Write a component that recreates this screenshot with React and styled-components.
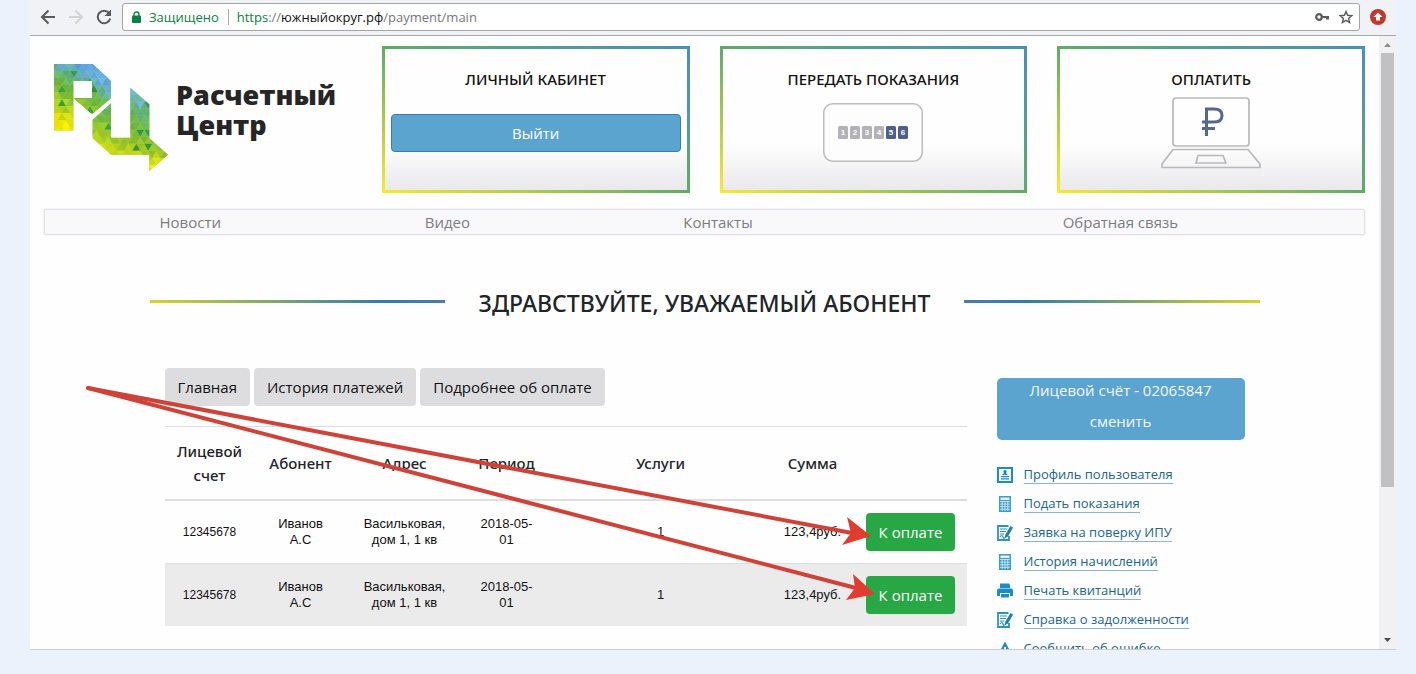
import React, { Fragment } from 'react';

import styled, { createGlobalStyle } from 'styled-components';

const navItems = ['Новости', 'Видео', 'Контакты', 'Обратная связь'];

const tabs = ['Главная', 'История платежей', 'Подробнее об оплате'];

const columns = [
    { title: 'Лицевой счет', width: 90 },
    { title: 'Абонент', width: 92 },
    { title: 'Адрес', width: 116 },
    { title: 'Период', width: 88 },
    { title: 'Услуги', width: 220 },
    { title: 'Сумма', width: 84 },
    { title: '', width: 112 },
];

const payments = [
    { id: 1, account: '12345678', name: ['Иванов', 'А.С'], address: ['Васильковая,', 'дом 1, 1 кв'], period: ['2018-05-', '01'], services: 1, sum: '123,4руб.' },
    { id: 2, account: '12345678', name: ['Иванов', 'А.С'], address: ['Васильковая,', 'дом 1, 1 кв'], period: ['2018-05-', '01'], services: 1, sum: '123,4руб.' },
];

const links = [
    { text: 'Профиль пользователя', icon: 'profile' },
    { text: 'Подать показания', icon: 'calc' },
    { text: 'Заявка на поверку ИПУ', icon: 'form' },
    { text: 'История начислений', icon: 'calc' },
    { text: 'Печать квитанций', icon: 'print' },
    { text: 'Справка о задолженности', icon: 'form' },
    { text: 'Сообщить об ошибке', icon: 'warning' },
];

// mosaic of small triangles: blue on top, green, yellow at the bottom
const stops = [
    [-0.35, [70, 145, 215]],
    [-0.1, [105, 178, 225]],
    [0.08, [95, 180, 110]],
    [0.3, [120, 186, 50]],
    [0.55, [175, 208, 30]],
    [0.78, [242, 230, 0]],
];

const mix = (v) => {
    if (v <= stops[0][0]) return stops[0][1];
    for (let i = 1; i < stops.length; i++) {
        if (v <= stops[i][0]) {
            const k = (v - stops[i - 1][0]) / (stops[i][0] - stops[i - 1][0]);
            return stops[i][1].map((c, n) => stops[i - 1][1][n] * (1 - k) + c * k);
        }
    }
    return stops[stops.length - 1][1];
};

const noise = (a, b) => {
    const n = Math.sin(a * 12.9898 + b * 78.233) * 43758.5453;
    return n - Math.floor(n);
};

const mosaic = (left, top, width, height, slope) => {
    const list = [];
    const side = 24;
    const step = 21;
    for (let r = 0; r * step < height; r++) {
        for (let c = -2; c * (side / 2) < width; c++) {
            const x = left + c * (side / 2);
            const y = top + r * step;
            const up = (r + c) % 2 === 0;
            const points = up
                ? `${x},${y + step} ${x + side},${y + step} ${x + side / 2},${y}`
                : `${x},${y} ${x + side},${y} ${x + side / 2},${y + step}`;
            const n = noise(r + left, c);
            const v = (y - top) / height - ((x - left) / width) * slope + (n - 0.5) * 0.16;
            const shade = 0.94 + noise(c, r + 5) * 0.12;
            const base = n > 0.93 && v < 0.6 && v > 0 ? [50, 155, 65] : mix(v);
            const fill = base.map((p) => Math.min(255, Math.round(p * shade)));
            list.push(<polygon key={`${r}-${c}`} points={points} fill={`rgb(${fill.join(',')})`} />);
        }
    }
    return list;
};

const Logo = () => (
    <svg width="114" height="107" viewBox="164 192 342 321" aria-hidden="true">
        <clipPath id="er">
            <path clipRule="evenodd" d="M164 192H280L335 243V295L278 343L222 294V392H164ZM222 243V294H278V243Z" />
        </clipPath>
        <clipPath id="tse">
            <path d="M335 310V413H393V263L450 313V415L506 464L450 513V464H335L279 413V360Z" />
        </clipPath>
        <g clipPath="url(#er)">
            <rect x="164" y="192" width="171" height="200" fill="#a6cf7e" />
            {mosaic(164, 192, 171, 200, 0.42)}
        </g>
        <g clipPath="url(#tse)">
            <rect x="279" y="263" width="227" height="250" fill="#a6cf7e" />
            {mosaic(279, 263, 227, 250, 0.3)}
        </g>
    </svg>
);

const Meter = () => (
    <svg width="100" height="60" viewBox="0 0 100 60" aria-hidden="true">
        <rect x="0.75" y="0.75" width="98.5" height="57.5" rx="9" fill="#fdfdfe" stroke="#bdbdc0" strokeWidth="1.5" />
        {[1, 2, 3, 4, 5, 6].map((n, i) => (
            <g key={n}>
                <rect x={15 + i * 12} y="23" width="10" height="13" rx="1.5" fill={n > 4 ? '#4d5f8c' : '#b3b2b6'} />
                <text x={20 + i * 12} y="32" textAnchor="middle" fontFamily="Liberation Sans, sans-serif" fontWeight="700" fontSize="8" fill="#fff">{n}</text>
            </g>
        ))}
    </svg>
);

const Laptop = () => (
    <svg width="100" height="72" viewBox="0 0 100 72" fill="none" stroke="#b9b9bd" strokeWidth="1.7" aria-hidden="true">
        <rect x="12" y="1" width="76" height="48" rx="3" />
        <path d="M12 52.500H87L99 67V70.500H1V67Z" strokeLinejoin="round" />
        <path d="M37 58.500H62L65 66H35Z" strokeLinejoin="round" />
        <path d="M45.500 39V12H53Q61 12 61 18.500T53 25H41M41 31.500H54" stroke="#53678f" strokeWidth="3" />
    </svg>
);

const icons = {
    profile: (
        <Fragment>
            <rect x="1" y="1" width="14" height="14" fill="#fff" stroke="#1a8cc8" strokeWidth="2" />
            <path d="M8 3a1.700 1.700 0 0 1 1 3.100L11 8H5l2-1.900A1.700 1.700 0 0 1 8 3ZM4 9h8v1.200H4ZM4 11.300h8v1.200H4Z" fill="#1a8cc8" />
        </Fragment>
    ),
    calc: (
        <Fragment>
            <rect x="2" y="0" width="12" height="16" fill="#3d9dcb" />
            <path d="M3.500 1.500h9v2.500h-9Z" fill="#e3f2fa" />
            <path d="M3 5.500h10M3 8.100h10M3 10.700h10M3 13.300h10M5.200 5v10M8 5v10M10.800 5v10" stroke="#d7edf7" strokeWidth="0.800" />
        </Fragment>
    ),
    form: (
        <Fragment>
            <path d="M11.500 1H1V15H12V11" fill="none" stroke="#2b92bf" strokeWidth="1.800" />
            <path d="M3 4h7M3 6.500h6M3 9h4M3 12q2-3 3 0t3-1" fill="none" stroke="#2b92bf" strokeWidth="1.200" />
            <path d="M13.500 1l2.500 1.500L11 11.500l-3 1.500L8.300 9.700Z" fill="#1a7fb4" />
        </Fragment>
    ),
    print: (
        <Fragment>
            <path d="M3 0.500H12L13 2V5H3Z" fill="#1a8cc8" />
            <path d="M2 5.500H14Q16 5.500 16 7.500V13H13V10H3V13H0V7.500Q0 5.500 2 5.500Z" fill="#1a8cc8" />
            <path d="M4 11H12V14.500H4Z" fill="#1a8cc8" />
        </Fragment>
    ),
    warning: <path d="M8 0.500L16 15.500H0ZM7 6v5h2V6Z" fill="#1a8cc8" fillRule="evenodd" />,
};

const Card = ({ title, children }) => (
    <CardBox>
        <CardTitle>{title}</CardTitle>
        <CardBody>{children}</CardBody>
    </CardBox>
);

const Toolbar = () => (
    <Bar>
        <IconButton type="button" aria-label="Назад">
            <svg width="16" height="16" viewBox="0 0 16 16" fill="none" stroke="#5a5a5a" strokeWidth="2">
                <path d="M15 8H2.500M8.500 1.500L2 8l6.500 6.500" />
            </svg>
        </IconButton>
        <IconButton type="button" aria-label="Вперед">
            <svg width="16" height="16" viewBox="0 0 16 16" fill="none" stroke="#d3d3d3" strokeWidth="2">
                <path d="M1 8h12.500M7.500 1.500L14 8l-6.500 6.500" />
            </svg>
        </IconButton>
        <IconButton type="button" aria-label="Обновить">
            <svg width="16" height="16" viewBox="0 0 16 16">
                <path d="M13 4A6.300 6.300 0 1 0 14.200 9.500" fill="none" stroke="#5a5a5a" strokeWidth="2" />
                <path d="M15 0.500V7H8.500Z" fill="#5a5a5a" />
            </svg>
        </IconButton>
        <Address>
            <svg width="9" height="12" viewBox="0 0 9 12">
                <path d="M2 5V3.500a2.500 2.500 0 0 1 5 0V5" fill="none" stroke="#0b8043" strokeWidth="1.400" />
                <rect y="4.500" width="9" height="7.500" rx="1" fill="#0b8043" />
            </svg>
            <Secure>Защищено</Secure>
            <Url>
                <Scheme>https</Scheme>://<Host>южныйокруг.рф</Host>/payment/main
            </Url>
            <IconButton type="button" aria-label="Пароли">
                <svg width="14" height="8" viewBox="0 0 14 8">
                    <circle cx="4" cy="4" r="2.800" fill="none" stroke="#5a5a5a" strokeWidth="2.200" />
                    <path d="M7 3H14V6.500H11V5H7Z" fill="#5a5a5a" />
                </svg>
            </IconButton>
            <IconButton type="button" aria-label="Добавить в закладки">
                <svg width="14" height="14" viewBox="0 0 14 14">
                    <path d="M7 1.500L8.600 5.300L12.800 5.700L9.600 8.400L10.600 12.500L7 10.300L3.400 12.500L4.400 8.400L1.200 5.700L5.400 5.300Z" fill="none" stroke="#5a5a5a" strokeWidth="1.400" />
                </svg>
            </IconButton>
        </Address>
        <IconButton type="button" aria-label="Расширение">
            <svg width="16" height="16" viewBox="0 0 16 16">
                <circle cx="8" cy="8" r="8" fill="#c0392f" />
                <path d="M8 3.500L12.500 8H10V11.500H6V8H3.500Z" fill="#fff" />
            </svg>
        </IconButton>
    </Bar>
);

const Payments = () => (
    <Table>
        <colgroup>
            {columns.map((col) => (
                <col key={col.title} style={{ width: `${(col.width / 802) * 100}%` }} />
            ))}
        </colgroup>
        <thead>
            <tr>
                {columns.map((col) => (
                    <Th key={col.title}>{col.title}</Th>
                ))}
            </tr>
        </thead>
        <tbody>
            {payments.map((row) => (
                <Row key={row.id}>
                    <Td $small>{row.account}</Td>
                    <Td>{row.name[0]}<br />{row.name[1]}</Td>
                    <Td>{row.address[0]}<br />{row.address[1]}</Td>
                    <Td>{row.period[0]}<br />{row.period[1]}</Td>
                    <Td>{row.services}</Td>
                    <Td>{row.sum}</Td>
                    <Td><PayButton type="button">К оплате</PayButton></Td>
                </Row>
            ))}
        </tbody>
    </Table>
);

const Arrows = () => (
    <Overlay width="860" height="240" viewBox="80 376 860 240" aria-hidden="true">
        <g stroke="#cf4238" strokeWidth="4" strokeLinecap="round">
            <path d="M88 388L852 533" />
            <path d="M88 388L856 588" />
        </g>
        <path d="M871 536L847 517L851 533L842 545Z" fill="#e23b30" />
        <path d="M875 594L853 574L855 588L846 600Z" fill="#e23b30" />
    </Overlay>
);

const App = () => {
    return (
        <Fragment>
            <GlobalStyle />
            <Page>
                <Browser>
                    <Toolbar />
                    <View>
                        <Content>
                            <Header>
                                <Brand>
                                    <Logo />
                                    <BrandName>Расчетный<br />Центр</BrandName>
                                </Brand>
                                <Card title="ЛИЧНЫЙ КАБИНЕТ">
                                    <ExitButton type="button">Выйти</ExitButton>
                                </Card>
                                <Card title="ПЕРЕДАТЬ ПОКАЗАНИЯ"><Meter /></Card>
                                <Card title="ОПЛАТИТЬ"><Laptop /></Card>
                            </Header>
                            <Nav>
                                {navItems.map((item) => (
                                    <NavLink key={item} href="#">{item}</NavLink>
                                ))}
                            </Nav>
                            <Greeting>
                                <Line $to="right" />
                                <Title>ЗДРАВСТВУЙТЕ, УВАЖАЕМЫЙ АБОНЕНТ</Title>
                                <Line $to="left" />
                            </Greeting>
                            <Main>
                                <section>
                                    <Tabs>
                                        {tabs.map((tab) => (
                                            <Tab key={tab} type="button">{tab}</Tab>
                                        ))}
                                    </Tabs>
                                    <Payments />
                                </section>
                                <Sidebar>
                                    <Account>
                                        <span>Лицевой счёт - 02065847</span>
                                        <ChangeLink href="#">сменить</ChangeLink>
                                    </Account>
                                    <Menu>
                                        {links.map((link) => (
                                            <MenuItem key={link.text}>
                                                <svg width="16" height="16" viewBox="0 0 16 16" aria-hidden="true">{icons[link.icon]}</svg>
                                                <MenuLink href="#">{link.text}</MenuLink>
                                            </MenuItem>
                                        ))}
                                    </Menu>
                                </Sidebar>
                            </Main>
                            <Arrows />
                        </Content>
                        <Scrollbar>
                            <svg width="7" height="4" viewBox="0 0 7 4"><path d="M0 4L3.500 0L7 4Z" fill="#8c8c8c" /></svg>
                            <Track><Thumb /></Track>
                            <svg width="7" height="4" viewBox="0 0 7 4"><path d="M0 0L3.500 4L7 0Z" fill="#4a4a4a" /></svg>
                        </Scrollbar>
                    </View>
                </Browser>
            </Page>
        </Fragment>
    );
}

const GlobalStyle = createGlobalStyle`
    * {
        box-sizing: border-box;
    }

    body {
        margin: 0;
        font-family: 'Open Sans', 'Noto Sans', sans-serif;
        font-size: 15px;
        line-height: 24px;
        color: #212529;
        background-color: #ebf2fb;
    }

    button {
        font-family: inherit;
        font-size: inherit;
        line-height: inherit;
        cursor: pointer;
    }

    svg {
        display: block;
        flex-shrink: 0;
    }
`;

export const Page = styled.div`
    height: 100vh;
    padding: 0 20px 24px 30px;
    overflow: hidden;
`;

export const Browser = styled.div`
    display: flex;
    flex-direction: column;
    height: 100%;
    border-bottom: 1px solid #cdcbd1;
    background-color: #fefefe;
`;

export const Bar = styled.div`
    display: flex;
    align-items: center;
    gap: 12px;
    height: 36px;
    padding: 0 10px 2px;
    border-bottom: 1px solid #a9a9ad;
    background-color: #f1f2f5;
`;

export const IconButton = styled.button`
    display: flex;
    padding: 0;
    border: none;
    background: none;
`;

export const Address = styled.div`
    display: flex;
    flex: 1;
    align-items: center;
    gap: 10px;
    height: 28px;
    margin-left: -2px;
    margin-right: -2px;
    padding: 0 6px 0 9px;
    border: 1px solid #a5a5a9;
    border-radius: 3px;
    background-color: #fff;
    font-size: 13px;
`;

export const Secure = styled.span`
    padding-right: 9px;
    margin-left: -2px;
    border-right: 1px solid #a9a9a9;
    line-height: 16px;
    color: #0b8043;
`;

export const Url = styled.div`
    flex: 1;
    margin-left: -2px;
    color: #777;
`;

export const Scheme = styled.span`
    color: #0b8043;
`;

export const Host = styled.span`
    color: #111;
`;

export const View = styled.div`
    display: flex;
    flex: 1;
    min-height: 0;
`;

export const Content = styled.div`
    position: relative;
    flex: 1;
    overflow: hidden;
    padding: 10px 14px 0;
`;

export const Header = styled.header`
    display: grid;
    grid-template-columns: repeat(4, 1fr);
    gap: 30px;
`;

export const Brand = styled.div`
    display: flex;
    align-items: flex-start;
    gap: 8px;
    padding: 18px 0 0 10px;
`;

export const BrandName = styled.div`
    padding-top: 16px;
    font-family: 'Open Sans', 'Noto Sans', sans-serif;
    font-size: 27px;
    font-weight: 800;
    line-height: 30px;
    color: #262626;
`;

export const CardBox = styled.div`
    padding: 18px 6px 21px;
    border: 3px solid;
    border-image: linear-gradient(to top right, #f8e92c, #60ab68, #4a8fbb) 1;
    background: linear-gradient(#fefefe 68%, #e9e9ec);
`;

export const CardTitle = styled.div`
    margin-bottom: 6px;
    font-family: 'Noto Sans', sans-serif;
    font-weight: 500;
    text-align: center;
    color: #111;
`;

export const CardBody = styled.div`
    display: flex;
    align-items: center;
    justify-content: center;
    height: 72px;
`;

export const ExitButton = styled.button`
    width: 100%;
    padding: 6px 12px;
    border: 1px solid #3b7ca6;
    border-radius: 4px;
    background-color: #5ba4cf;
    color: white;
`;

export const Nav = styled.nav`
    display: grid;
    grid-template-columns: 291fr 224fr 318fr 488fr;
    margin-top: 16px;
    border: 1px solid #e2e2e6;
    border-radius: 2px;
    background-color: #f9f9fb;
    box-shadow: 0 0 2px #dddde2;
`;

export const NavLink = styled.a`
    text-align: center;
    text-decoration: none;
    color: #7c7c80;
`;

export const Greeting = styled.div`
    display: flex;
    align-items: center;
    gap: 34px;
    max-width: 1110px;
    margin: 53px auto 0;
`;

export const Title = styled.h1`
    margin: 0;
    font-family: 'Noto Sans', sans-serif;
    font-size: 23px;
    font-weight: 500;
    line-height: 30px;
`;

export const Line = styled.div`
    flex: 1;
    height: 3px;
    margin-bottom: 4px;
    background: linear-gradient(to ${(props) => props.$to}, #d6d42c, #2f7dab 80%, #4a7bb0);
`;

export const Main = styled.main`
    display: grid;
    grid-template-columns: 802fr 248fr;
    gap: 30px;
    max-width: 1110px;
    margin: 50px auto 0;
    padding: 0 15px;
`;

export const Tabs = styled.div`
    display: flex;
    gap: 4px;
    margin-bottom: 20px;
`;

export const Tab = styled.button`
    padding: 7px 13px;
    border: none;
    border-radius: 4px;
    background-color: #dddde0;
    color: #111;
`;

export const Table = styled.table`
    width: 100%;
    table-layout: fixed;
    border-collapse: collapse;
    text-align: center;
`;

export const Th = styled.th`
    padding: 12px 8px;
    border-top: 1px solid #dedee1;
    border-bottom: 2px solid #dedee1;
    font-family: 'Noto Sans', sans-serif;
    font-weight: 500;
`;

export const Row = styled.tr`
    height: 63px;

    &:nth-child(even) {
        background-color: #ebebec;
    }
`;

export const Td = styled.td`
    padding: 0;
    border-top: 1px solid #dedee1;
    font-family: 'Liberation Sans', sans-serif;
    font-size: ${(props) => (props.$small ? '12px' : '13px')};
    line-height: 16px;
    color: #111;
`;

export const PayButton = styled.button`
    padding: 7px 13px;
    border: none;
    border-radius: 4px;
    background-color: #28a745;
    font-family: 'Open Sans', 'Noto Sans', sans-serif;
    font-size: 15px;
    line-height: 24px;
    color: white;
`;

export const Sidebar = styled.aside`
    padding-top: 10px;
`;

export const Account = styled.div`
    display: flex;
    flex-direction: column;
    align-items: center;
    gap: 7px;
    padding: 0 0 7px;
    border-radius: 5px;
    background-color: #5ba4cf;
    color: #f3f8fc;
`;

export const ChangeLink = styled.a`
    text-decoration: none;
    color: #f3f8fc;
`;

export const Menu = styled.ul`
    margin: 20px 0 0;
    padding: 0;
    list-style: none;
`;

export const MenuItem = styled.li`
    display: flex;
    align-items: center;
    gap: 11px;
    height: 29px;
`;

export const MenuLink = styled.a`
    border-bottom: 1px solid #8fb4c9;
    font-size: 13px;
    line-height: 18px;
    text-decoration: none;
    color: #20658c;
`;

export const Scrollbar = styled.div`
    display: flex;
    flex-direction: column;
    align-items: center;
    width: 17px;
    padding: 7px 0;
    background-color: #f1f1f3;
`;

export const Track = styled.div`
    flex: 1;
    width: 13px;
    margin: 6px 0;
`;

export const Thumb = styled.div`
    height: 75%;
    background-color: #c1c0c3;
`;

export const Overlay = styled.svg`
    position: absolute;
    top: 340px;
    left: 50px;
    pointer-events: none;
`;

export default App;
